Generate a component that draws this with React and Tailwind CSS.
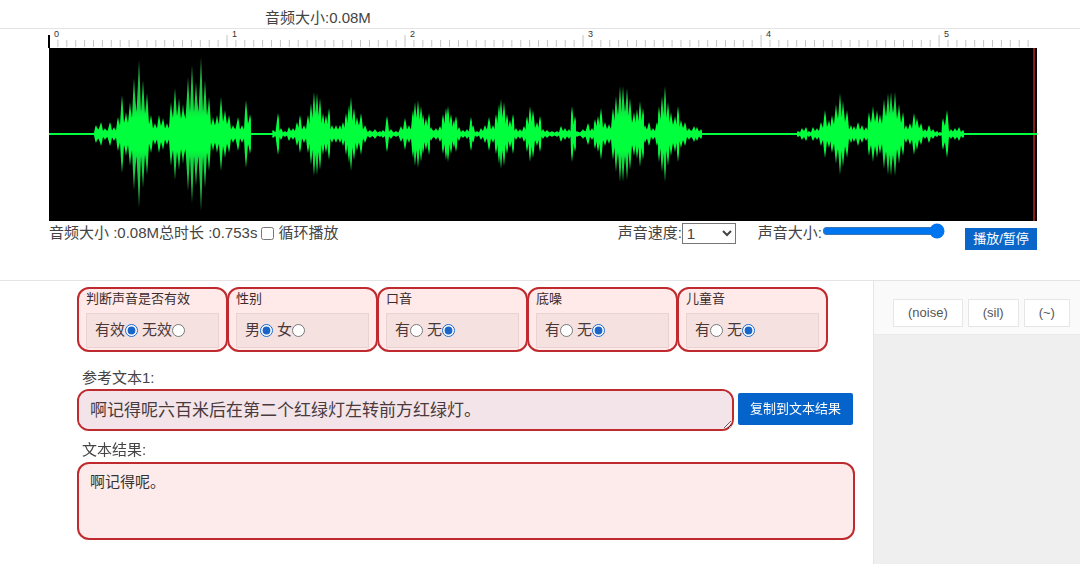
import { useState } from "react"

// [x, amplitude] of every spike, on a 988 x 173 canvas
const PEAKS = [
    [43, 0], [47, 9], [52, 12], [56, 6], [61, 12], [65, 7], [69, 17], [73, 39], [77, 22],
    [81, 32], [85, 56], [90, 74], [94, 54], [98, 41], [102, 19], [106, 11], [110, 19],
    [114, 16], [118, 11], [122, 32], [126, 46], [130, 36], [134, 30], [139, 57], [143, 69],
    [147, 52], [152, 77], [156, 54], [160, 37], [164, 17], [168, 19], [172, 37], [176, 24],
    [180, 19], [184, 9], [189, 17], [193, 9], [197, 34], [201, 20], [203, 0], [223, 0],
    [224, 4], [229, 21], [232, 6], [236, 3], [240, 7], [244, 6], [248, 12], [251, 19],
    [255, 9], [259, 19], [262, 31], [265, 42], [268, 41], [271, 36], [274, 21], [277, 19],
    [280, 26], [283, 9], [287, 9], [291, 9], [294, 12], [297, 21], [300, 29], [302, 37],
    [305, 26], [308, 17], [312, 21], [316, 9], [321, 4], [326, 5], [331, 3], [334, 4],
    [338, 18], [342, 5], [347, 3], [352, 8], [356, 16], [360, 9], [364, 24], [366, 32],
    [369, 34], [372, 28], [374, 20], [377, 16], [380, 21], [382, 7], [387, 6], [391, 8],
    [394, 20], [397, 26], [399, 28], [402, 20], [405, 14], [407, 18], [410, 7], [414, 4],
    [418, 5], [422, 17], [424, 9], [428, 3], [432, 6], [436, 9], [440, 17], [444, 9],
    [447, 20], [450, 30], [452, 35], [455, 32], [458, 20], [461, 14], [464, 20], [467, 6],
    [471, 5], [475, 8], [478, 18], [481, 28], [484, 24], [488, 12], [491, 18], [494, 5],
    [498, 4], [503, 3], [508, 3], [512, 8], [516, 6], [520, 5], [523, 28], [526, 18],
    [528, 3], [534, 5], [539, 11], [543, 6], [546, 15], [549, 18], [552, 26], [556, 12],
    [560, 10], [564, 26], [567, 38], [571, 48], [574, 48], [578, 46], [581, 36], [585, 22],
    [588, 25], [591, 33], [594, 26], [596, 9], [600, 12], [604, 6], [608, 12], [610, 28],
    [613, 38], [616, 48], [619, 32], [622, 22], [626, 18], [629, 28], [632, 14],
    [636, 12], [640, 6], [645, 8], [648, 7], [652, 5], [654, 0], [747, 0], [749, 3],
    [753, 6], [757, 7], [760, 3], [764, 7], [768, 6], [772, 12], [776, 24], [780, 14],
    [783, 19], [787, 30], [791, 41], [794, 33], [798, 24], [802, 9], [805, 8], [809, 12],
    [813, 9], [817, 7], [820, 22], [824, 28], [828, 24], [831, 20], [835, 35], [839, 41],
    [842, 42], [846, 42], [850, 30], [854, 22], [857, 9], [861, 11], [865, 21], [868, 16],
    [872, 11], [876, 5], [880, 9], [884, 5], [888, 3], [891, 2], [894, 16], [898, 24],
    [902, 5], [906, 6], [910, 7], [914, 4], [916, 0],
]

const MIDDLE = 86

// Each spike is followed by a valley, so the centre of a burst stays solid
function wavePath() {
    const points = [[0, 1]]
    PEAKS.forEach(([x, h], i) => {
        const shoulder = Math.max(h * 0.72, 1)
        points.push([x - 0.9, shoulder], [x, Math.max(h, 1)], [x + 0.9, shoulder])
        const next = PEAKS[i + 1]
        if (next) {
            const valley = Math.min(Math.min(h, next[1]) * 0.5, 22)
            points.push([(x + next[0]) / 2, Math.max(valley, 1)])
        }
    })
    points.push([988, 1])
    const top = points.map(([x, h]) => `${x},${MIDDLE - h}`)
    const bottom = points.map(([x, h]) => `${x},${MIDDLE + h}`).reverse()
    return `M${top.join("L")}L${bottom.join("L")}Z`
}

const WAVE = wavePath()

const Ruler = () => {
    const ticks = Array.from({ length: 111 }, (_, i) => i)
    return (
        <svg className="block h-[19px] w-full overflow-visible">
            {ticks.map((i) => {
                const x = `${(i * 100) / 111}%`
                const major = i % 20 === 0
                return (
                    <g key={i}>
                        <line
                            x1={x}
                            x2={x}
                            y1={major ? 6 : 11}
                            y2={i === 0 ? 19 : 18}
                            stroke={i === 0 ? "#000" : "#c4c4c4"}
                            strokeWidth={i === 0 ? 2 : 1}
                        />
                        {major && (
                            <text x={x} y="8" dx="5" fontSize="9" fill="#333">
                                {i / 20}
                            </text>
                        )}
                    </g>
                )
            })}
        </svg>
    )
}

const Waveform = () => (
    <svg
        viewBox="0 0 988 173"
        preserveAspectRatio="none"
        className="block h-[173px] w-full bg-black"
    >
        <defs>
            <linearGradient id="wave" gradientUnits="userSpaceOnUse" x1="0" y1="6" x2="0" y2="166">
                <stop offset="0" stopColor="#2f9a48" />
                <stop offset="0.34" stopColor="#12dc42" />
                <stop offset="0.4" stopColor="#00ff3c" />
                <stop offset="0.6" stopColor="#00ff3c" />
                <stop offset="0.66" stopColor="#12dc42" />
                <stop offset="1" stopColor="#2f9a48" />
            </linearGradient>
        </defs>
        <path d={WAVE} fill="url(#wave)" />
        <rect x="984" y="0" width="2" height="173" fill="#8c1a17" />
        <rect x="983" y="85" width="5" height="2" fill="#00ff3c" />
    </svg>
)

const fields = [
    { name: "valid", title: "判断声音是否有效", options: ["有效", "无效"], value: "有效" },
    { name: "gender", title: "性别", options: ["男", "女"], value: "男" },
    { name: "accent", title: "口音", options: ["有", "无"], value: "无" },
    { name: "noise", title: "底噪", options: ["有", "无"], value: "无" },
    { name: "child", title: "儿童音", options: ["有", "无"], value: "无" },
]

const RadioCard = ({ field }) => {
    const [value, setValue] = useState(field.value)
    return (
        <fieldset className="-mr-px h-[65px] w-[151px] rounded-xl border-2 border-[#bf2a2e] bg-[#ffe9e9] px-[7px]">
            <legend className="float-left w-full text-[13px] leading-5 text-[#3d2c2c]">
                {field.title}
            </legend>
            <div className="float-left mt-1 flex h-[35px] w-full items-center gap-1 border border-[#e8d2d2] bg-[#f6e1e1] px-2 text-[15px] text-[#4a3838]">
                {field.options.map((option) => (
                    <label key={option} className="flex items-center">
                        {option}
                        <input
                            type="radio"
                            name={field.name}
                            checked={value === option}
                            onChange={() => setValue(option)}
                            className="h-[13px] w-[13px] accent-[#1a66c8]"
                        />
                    </label>
                ))}
            </div>
        </fieldset>
    )
}

const tags = ["(noise)", "(sil)", "(~)"]

const App = () => {
    const [loop, setLoop] = useState(false)
    const [speed, setSpeed] = useState("1")
    const [volume, setVolume] = useState(100)
    const [reference, setReference] = useState("啊记得呢六百米后在第二个红绿灯左转前方红绿灯。")
    const [result, setResult] = useState("啊记得呢。")

    return (
        <div className="flex min-h-screen flex-col bg-white font-['Liberation_Sans','Noto_Sans_CJK_SC',sans-serif] text-[15px] text-[#444]">
            <header className="flex h-[29px] items-center border-b border-[#e4e4e4] pt-2 pl-[265px]">
                音频大小:0.08M
            </header>

            <section className="h-[252px] border-b border-[#e4e4e4] pr-[43px] pl-[49px]">
                <Ruler />
                <Waveform />
                <div className="flex h-6 items-center">
                    <span>音频大小 :0.08M总时长 :0.753s</span>
                    <label className="ml-1 flex items-center gap-1">
                        <input
                            type="checkbox"
                            checked={loop}
                            onChange={(e) => setLoop(e.target.checked)}
                            className="h-[13px] w-[13px]"
                        />
                        循环播放
                    </label>
                    <label className="mr-[22px] ml-auto flex items-center">
                        声音速度:
                        <select
                            value={speed}
                            onChange={(e) => setSpeed(e.target.value)}
                            className="h-[21px] w-[54px] border border-[#767676] bg-white text-[15px] leading-4"
                        >
                            <option>0.5</option>
                            <option>1</option>
                            <option>1.5</option>
                            <option>2</option>
                        </select>
                    </label>
                    <label className="mr-5 flex items-center">
                        声音大小:
                        <input
                            type="range"
                            min="0"
                            max="100"
                            value={volume}
                            onChange={(e) => setVolume(Number(e.target.value))}
                            className="mb-1 w-[123px] accent-[#0075f0]"
                        />
                    </label>
                    <button
                        type="button"
                        className="mt-3 h-[22px] w-[72px] bg-[#0a66c8] text-[13px] leading-5 text-white"
                    >
                        播放/暂停
                    </button>
                </div>
            </section>

            <div className="flex flex-1">
                <main className="min-w-0 flex-1 pt-1.5 pr-[18px] pl-[77px]">
                    <div className="flex">
                        {fields.map((field) => (
                            <RadioCard key={field.name} field={field} />
                        ))}
                    </div>

                    <label htmlFor="reference" className="mt-[15px] block pl-[5px] leading-[22px]">
                        参考文本1:
                    </label>
                    <div className="flex items-start gap-1">
                        <textarea
                            id="reference"
                            value={reference}
                            onChange={(e) => setReference(e.target.value)}
                            className="h-[42px] min-w-0 flex-1 resize rounded-xl border-2 border-[#bf2a2e] bg-[#f2e4e8] px-[11px] py-2 text-[17px] leading-6 text-[#4a3a3e]"
                        />
                        <button
                            type="button"
                            onClick={() => setResult(reference)}
                            className="mt-1 mr-0.5 h-8 w-[115px] rounded-xs bg-[#0564cc] text-[13px] text-white"
                        >
                            复制到文本结果
                        </button>
                    </div>

                    <label htmlFor="result" className="mt-2 mb-px block pl-[5px] leading-[22px]">
                        文本结果:
                    </label>
                    <textarea
                        id="result"
                        value={result}
                        onChange={(e) => setResult(e.target.value)}
                        className="block h-[78px] w-full resize-none rounded-xl border-2 border-[#bf2a2e] bg-[#fdeaea] px-[11px] py-1.5 text-[15px] leading-6 text-[#333]"
                    />
                </main>

                <aside className="w-[207px] border-l border-[#e6e6e6] bg-[#efefef]">
                    <div className="flex h-[54px] items-center gap-[5px] border-b border-[#eaeaea] bg-[#fafafa] pt-2.5 pl-[19px]">
                        {tags.map((tag) => (
                            <button
                                key={tag}
                                type="button"
                                className="h-7 border border-[#e6e6e6] bg-white px-3.5 text-[13px] text-[#555]"
                            >
                                {tag}
                            </button>
                        ))}
                    </div>
                </aside>
            </div>
        </div>
    )
}

export default App
